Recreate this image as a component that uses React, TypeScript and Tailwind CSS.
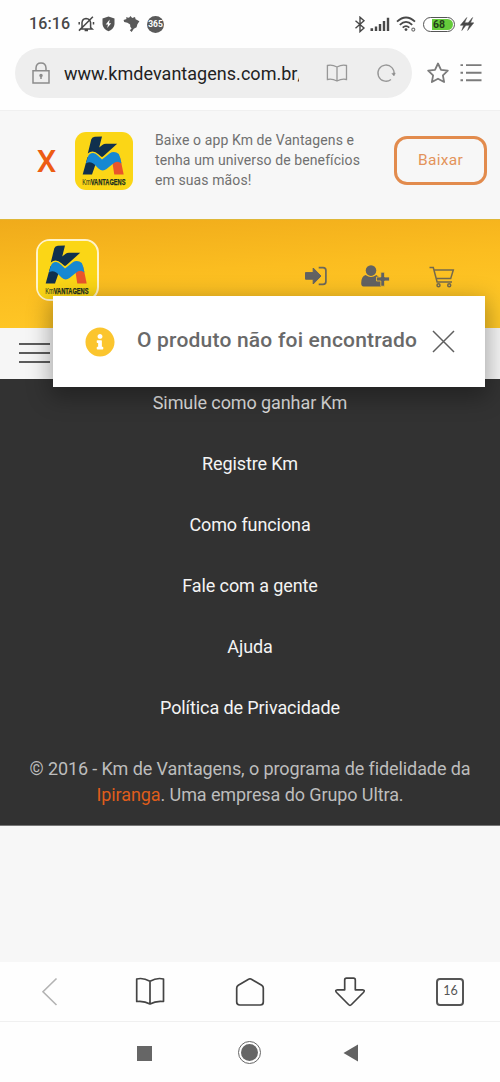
import type { ReactNode } from "react";
import { FaInfoCircle } from "react-icons/fa";

function Logo({ className }: { className: string }) {
  return (
    <svg viewBox="0 0 58 58" className={className}>
      <rect width="58" height="58" rx="11" fill="#fbd616" />
      <path d="M16.3 7.3Q17.2 4.9 19.8 4.8L27 4.5L24.2 15.6L27.3 13Q28.9 11.8 31 11.8H42.2L28 24.6Q27 25.5 26 24.6L23.7 22.4Q18 17.2 12.8 21.4Z" fill="#10304e" />
      <path d="M12.5 25L7.7 42.5H17L21 31Z" fill="#10304e" />
      <path d="M37.5 31L45.3 26L48.7 42.5H39.3Z" fill="#e9552b" />
      <path d="M10.8 31.6L12.8 25Q14.2 20.9 18.2 21Q20.7 21.3 23 23.7L27 27.5L34.5 21.4Q38 19.3 41.5 20.6Q44.3 21.6 45 25L46.5 31.4Q42 28 38 31.8L31.5 37Q27.5 40 23.5 36.5L19 31.9Q15 28.6 10.8 31.6Z" fill="#1688d2" />
      <text x="7.2" y="52.6" fontSize="8.3" fontFamily="Liberation Sans, sans-serif" fill="#20301f" textLength="43.3" lengthAdjust="spacingAndGlyphs">
        Km<tspan fontWeight="bold" stroke="#16291f" strokeWidth=".25">VANTAGENS</tspan>
      </text>
    </svg>
  );
}

function StatusBar() {
  return (
    <div className="flex h-[48px] items-center pl-[29px] pr-[26px] text-[#484848]">
      <span className="w-[49px] text-[16px] font-medium leading-[20px] tracking-[0.15px]">16:16</span>
      <svg viewBox="0 0 17 16" className="h-4 w-[17px]" fill="none" stroke="currentColor" strokeWidth="1.5">
        <path d="M4 11.5V6.5Q4.4 2.7 8 2.4Q12 2.7 12.6 6.5V11.5L14.2 13H2.4L4 11.5M6.6 14.6H10M1 14.8L14.9 .8M1.2 6V8.5M15.5 6V8.5" />
      </svg>
      <svg viewBox="0 0 13 16" className="ml-[7px] h-4 w-[13px]">
        <path d="M6.5 .5L12.5 2.6V8Q12.2 13 6.5 15.3Q.8 13 .5 8V2.6Z" fill="#555" />
        <path d="M7.7 3.5L3.7 8.4H6L5.2 12L9.2 7.2H7Z" fill="#fff" />
      </svg>
      <svg viewBox="0 0 17 18" className="ml-[8px] h-[18px] w-[17px]">
        <path d="M.6 5L3.5 4L3 2.2L6 2.7L7.5 1L9.2 3L12 2L12.6 4.3L16.4 6.2L14.4 9.2L13.6 12.3L10.8 13.8L8.7 17L6.8 15.3L8.6 13.4L7.3 11.8L7.1 9.6L4.4 7.7L1.2 7Z" fill="#5a5a5a" />
      </svg>
      <div className="ml-[7px] flex size-[17px] items-center justify-center rounded-full bg-[#5a5a5a]">
        <span className="text-[8.5px] font-bold leading-[8px] text-white">365</span>
      </div>
      <div className="ml-auto flex items-center">
        <svg viewBox="0 0 12 17" className="h-[17px] w-3" fill="none" stroke="currentColor" strokeWidth="1.4">
          <path d="M1.5 4.7L10 12L6 15.6V1.2L10 4.8L1.5 12.2" />
        </svg>
        <svg viewBox="0 0 20 14" className="ml-[4px] h-[14px] w-5" fill="currentColor">
          <path d="M.5 11.2h2.6V14H.5zM4.8 9.4h2.4V14H4.8zM8.8 7h2.4v7H8.8zM12.8 4h2.4v10h-2.4zM16.8 .8h2.4V14h-2.4z" />
        </svg>
        <svg viewBox="0 0 21 16" className="ml-[6px] h-4 w-[21px]" fill="none" stroke="currentColor" strokeWidth="1.8">
          <path d="M1 5.7Q10 -2.7 19 5.7M3.8 8.8Q10 3 16.2 8.8M6.7 11.7Q10 8.6 13.3 11.7" />
          <circle cx="10" cy="13.6" r="1.4" fill="currentColor" stroke="none" />
          <circle cx="17.3" cy="13.6" r="1.5" stroke="#777" strokeWidth="1.2" />
        </svg>
        <div className="ml-[6px] flex h-[15px] w-[32px] rounded-full border-[1.5px] border-[#555] p-px">
          <div className="flex w-full items-center justify-center rounded-full bg-gradient-to-r from-white from-25% to-[#65cb3b] to-25% pt-px text-[10.5px] font-bold leading-[11px] text-[#243d19]">68</div>
        </div>
        <svg viewBox="0 0 14 14" className="ml-[5px] h-[14px] w-[14px]" fill="#484848">
          <path d="M6.8 .5L.3 8.3H3.6L1.8 13.5L8 5.8H4.7ZM12.6 .5L6.1 8.3H9.4L7.6 13.5L13.8 5.8H10.5Z" stroke="#484848" strokeWidth=".5" />
        </svg>
      </div>
    </div>
  );
}

function AddressBar() {
  return (
    <div className="flex h-[63px] items-start border-b border-[#f0f0f0] pl-[15px]">
      <div className="flex h-[50px] w-[397px] items-center rounded-full bg-[#eee] pl-[17px]">
        <svg viewBox="0 0 18 22" className="h-[22px] w-[18px]" fill="none" stroke="#8c8c8c" strokeWidth="1.5">
          <path d="M1 8.7H17V21H1ZM4 8.5V6Q4.2 1 9 1Q13.8 1 14 6V8.5M9 12.5V17" />
          <circle cx="9" cy="13.5" r="1" fill="#8c8c8c" />
        </svg>
        <div className="ml-[14px] w-[235px] overflow-hidden whitespace-nowrap pt-px text-[18px] leading-[24px] tracking-[0.03px] text-[#222]">www.kmdevantagens.com.br/</div>
        <svg viewBox="0 0 22 18" className="ml-[27px] h-[18px] w-[22px]" fill="none" stroke="#979797" strokeWidth="1.3">
          <path d="M11 3Q6 .3 1.4 1.5V15.5Q6 14.4 11 17Q16 14.4 20.5 15.5V1.5Q16 .3 11 3V17" />
        </svg>
        <svg viewBox="0 0 20 20" className="ml-[28px] size-5" fill="none" stroke="#979797" strokeWidth="1.3">
          <path d="M15 16.5A8.1 8.1 0 1 1 18 11.5" />
          <path d="M15.8 10.5L18 13L19.3 10Z" fill="#888" strokeWidth=".5" />
        </svg>
      </div>
      <svg viewBox="0 0 22 22" className="ml-[15px] mt-[14px] size-[22px]" fill="none" stroke="#7b7b7b" strokeWidth="1.8" strokeLinejoin="round">
        <path d="M11 1.5L14 7.8L20.8 8.7L15.9 13.4L17.1 20L11 16.7L4.9 20L6.1 13.4L1.2 8.7L8 7.8Z" />
      </svg>
      <svg viewBox="0 0 22 20" className="ml-[11px] mt-[14px] h-5 w-[22px]" fill="none" stroke="#7b7b7b" strokeWidth="1.9">
        <path d="M.5 3.1H3M6 3.1H21.5M.5 10.7H3M6 10.7H21.5M.5 18.3H3M6 18.3H21.5" />
      </svg>
    </div>
  );
}

function AppBanner() {
  return (
    <section className="flex h-[108px] bg-[#f7f7f7] pl-[36px]">
      <button className="mt-[34px] flex h-[34px] w-[21px] justify-center text-[31px] font-medium leading-[34px] text-[#ed5c13]">X</button>
      <Logo className="ml-[18px] mt-[21px] size-[58px] shrink-0" />
      <p className="ml-[22px] mt-[19px] w-[239px] whitespace-nowrap text-[14px] leading-[20px] tracking-[0.1px] text-[#707070]">
        Baixe o app Km de Vantagens e<br />tenha um universo de benefícios<br />em suas mãos!
      </p>
      <button className="mt-[25px] h-[49px] w-[93px] shrink-0 rounded-[13px] border-[3px] border-[#e28b4d] text-[15.5px] tracking-[0.3px] text-[#e3935a]">Baixar</button>
    </section>
  );
}

function SiteHeader() {
  return (
    <header>
      <div className="flex h-[109px] items-start border-t border-[#dfb737] bg-[linear-gradient(176deg,#f0ab1b_0%,#fbbd20_45%,#ffc827_85%)] pl-[36px]">
        <div className="mt-[19px] h-[62px] w-[63px] rounded-[14px] border-2 border-[#fff3c9] bg-[#fbd616]">
          <Logo className="size-[58px]" />
        </div>
        <svg viewBox="0 0 22 20" className="ml-[206px] mt-[46px] h-5 w-[22px]">
          <path d="M.5 6.6H8.2V2L16 10L8.2 18V13.2H.5Z" fill="#626262" stroke="#626262" strokeLinejoin="round" />
          <path d="M13.7 1.7H18Q20.9 1.7 20.9 4.6V15.4Q20.9 18.3 18 18.3H13.7" fill="none" stroke="#6b675b" strokeWidth="1.7" />
        </svg>
        <svg viewBox="0 0 29 22" className="ml-[34px] mt-[45px] h-[22px] w-[29px]" fill="#626262">
          <circle cx="10" cy="5.6" r="5.3" />
          <path d="M4.6 10Q10 14 15.4 10L18 12V16H20V21.6H2.6Q0 21 .2 18Q.2 11.5 4.6 10Z" />
          <path d="M19.8 7.2H23.6V12H28.5V16H23.6V21.2H19.8V16H15.5V12H19.8Z" stroke="#fbc125" strokeWidth=".8" />
        </svg>
        <svg viewBox="0 0 26 22" className="ml-[39px] mt-[46px] h-[22px] w-[26px]" fill="none" stroke="#74694d" strokeWidth="1.5">
          <path d="M.5 1.6H4.3L8.1 16H23M5.1 4H24.3L21.7 12.6H7.3" />
          <circle cx="9.5" cy="19.3" r="1.5" />
          <circle cx="20.2" cy="19.3" r="1.5" />
        </svg>
      </div>
      <div className="flex h-[51px] items-start bg-[#f6f6f6] pl-[19px] pt-[14px]">
        <svg viewBox="0 0 31 22" className="h-[22px] w-[31px]" stroke="#5c5c5c" strokeWidth="2">
          <path d="M0 2H31M0 11H31M0 20H31" />
        </svg>
      </div>
    </header>
  );
}

function Toast() {
  return (
    <div role="alert" className="absolute left-[53px] top-[296px] flex h-[91px] w-[432px] items-center bg-white pl-[32px] shadow-[0_7px_22px_3px_rgba(0,0,0,0.32)]">
      <FaInfoCircle className="size-[30px] text-[#fbc52e]" />
      <span className="ml-[22px] w-[280px] whitespace-nowrap pb-[3px] text-[21px] font-medium leading-[26px] tracking-[0.2px] text-[#696969]">O produto não foi encontrado</span>
      <svg viewBox="0 0 23 23" className="ml-[15px] size-[23px]" stroke="#5f5f5f" strokeWidth="1.5">
        <path d="M1 1L22 22M22 1L1 22" />
      </svg>
    </div>
  );
}

const links = ["Simule como ganhar Km", "Registre Km", "Como funciona", "Fale com a gente", "Ajuda", "Política de Privacidade"];

function Footer() {
  return (
    <footer className="h-[447px] border-b border-[#777] bg-[#323232] pt-[11px] text-center text-[18px] leading-[26px] tracking-[-0.09px]">
      <nav className="flex flex-col gap-[35px] text-[#f4f4f4]">
        {links.map((link, i) => (
          <a key={link} className={i === 0 ? "text-[#dedede]" : ""}>{link}</a>
        ))}
      </nav>
      <p className="mt-[35px] whitespace-nowrap text-[#bdbdbd]">
        © 2016 - Km de Vantagens, o programa de fidelidade da<br />
        <a className="text-[#df5d1b]">Ipiranga</a>. Uma empresa do Grupo Ultra.
      </p>
    </footer>
  );
}

function Tool({ children }: { children: ReactNode }) {
  return <button className="flex w-[100px] items-center justify-center">{children}</button>;
}

function BrowserToolbar() {
  const line = "size-[30px] fill-none stroke-[#444] stroke-[1.7]";
  return (
    <div className="flex h-[60px] border-b border-[#f0f0f0] bg-[#fefefe]">
      <Tool>
        <svg viewBox="0 0 30 30" className="size-[30px] fill-none stroke-[#b3b3b3] stroke-[1.6]"><path d="M21.5 1.5L8 14.8L21.5 28" /></svg>
      </Tool>
      <Tool>
        <svg viewBox="0 0 30 30" className={line}><path strokeLinejoin="round" d="M15 4.2Q8 .3 1.7 2V24.5Q9 23.5 15 27Q21 23.5 28.5 24.5V2Q22 .3 15 4.2V27" /></svg>
      </Tool>
      <Tool>
        <svg viewBox="0 0 30 30" className={line}><path strokeLinejoin="round" d="M14 2.1Q15 1.5 16 2.1L26.7 8.2Q28.3 9.2 28.3 11V25Q28.3 28 25.3 28H4.7Q1.7 28 1.7 25V11Q1.7 9.2 3.3 8.2Z" /></svg>
      </Tool>
      <Tool>
        <svg viewBox="0 0 30 30" className={line}><path strokeLinejoin="round" d="M9.7 12.8V3Q9.7 1.2 11.5 1.2H18.5Q20.3 1.2 20.3 3V12.8H27.5Q30.4 13 28.4 15.5L16.5 27.5Q15 29 13.5 27.5L1.6 15.5Q-.4 13 2.5 12.8Z" /></svg>
      </Tool>
      <Tool>
        <div className="flex h-[28px] w-[28px] items-center justify-center rounded-[4px] border-2 border-[#555] pl-px font-['Lato',sans-serif] text-[12.5px] text-[#555]">16</div>
      </Tool>
    </div>
  );
}

function SystemNav() {
  return (
    <div className="flex h-[60px] items-center bg-[#fefefe] pl-[137px]">
      <div className="mt-[3px] size-[15px] bg-[#666]" />
      <div className="ml-[86px] flex size-[23px] items-center justify-center rounded-full border-[1.5px] border-[#666]">
        <div className="size-[17px] rounded-full bg-[#666]" />
      </div>
      <svg viewBox="0 0 16 18" className="ml-[82px] mt-[2px] h-[18px] w-4"><path d="M.5 9L15 .5V17.5Z" fill="#626262" /></svg>
    </div>
  );
}

export default function App() {
  return (
    <main className="relative flex h-[1082px] w-[500px] flex-col overflow-hidden bg-[#f7f7f7] font-['Roboto',sans-serif]">
      <div className="bg-[#fefefe]">
        <StatusBar />
        <AddressBar />
      </div>
      <AppBanner />
      <SiteHeader />
      <Footer />
      <div className="flex-1" />
      <BrowserToolbar />
      <SystemNav />
      <Toast />
    </main>
  );
}
